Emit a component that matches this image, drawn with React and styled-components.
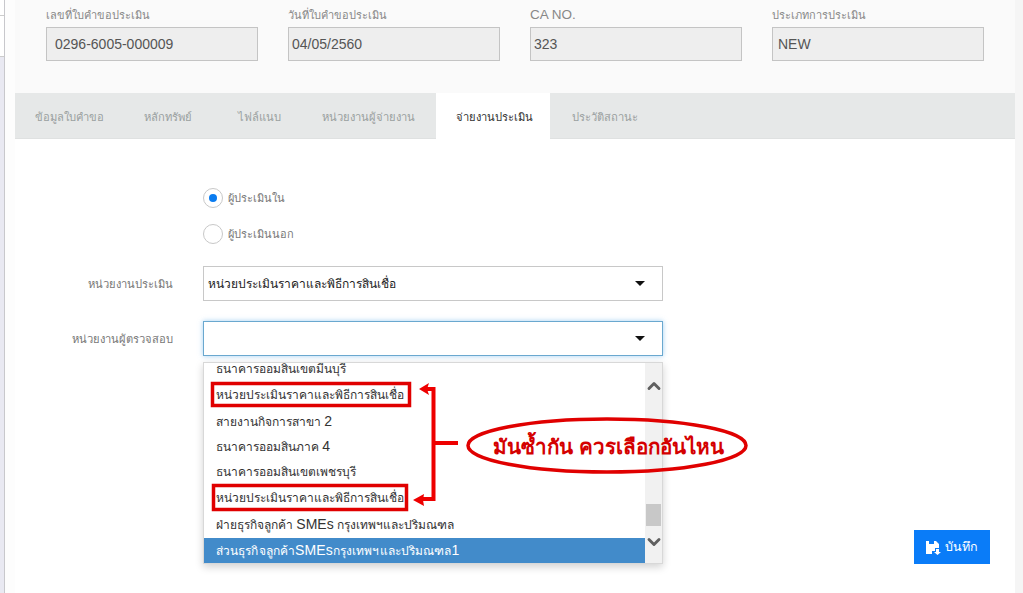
import styled, { createGlobalStyle } from "styled-components";
import { ChevronDown, ChevronUp } from "lucide-react";

const GlobalStyle = createGlobalStyle`
  html, body {
    margin: 0;
    padding: 0;
    height: 593px;
    overflow: hidden;
    background: #f5f5f5;
    font-family: "Liberation Sans", "Noto Sans", sans-serif;
  }
`;

const Page = styled.div`
  position: relative;
  width: 1023px;
  height: 593px;
  overflow: hidden;
  display: flex;
`;

const SideStrip = styled.div`
  width: 15px;
  flex: none;
  background: #fdfdfd;
`;

const Rail = styled.div`
  width: 5px;
  height: 100%;
  box-sizing: border-box;
  border-right: 1px solid #c8c8cc;
  display: flex;
  flex-direction: column;
`;

const RailCell = styled.div`
  height: ${(props) => props.$h}px;
  flex: ${(props) => (props.$h ? "none" : 1)};
  box-sizing: border-box;
  background: ${(props) => (props.$h ? "#fff" : "#e9e9f2")};
  border-bottom: ${(props) => (props.$h ? "1px solid #ccc" : "none")};
`;

const Main = styled.main`
  width: 1000px;
  flex: none;
  display: flex;
  flex-direction: column;
`;

const Header = styled.section`
  height: 93px;
  box-sizing: border-box;
  background: #fafafa;
  display: flex;
  padding: 7px 0 0 31px;
  gap: 30px;
`;

const HeadField = styled.div`
  width: 212px;
  flex: none;
`;

const HeadLabel = styled.div`
  height: 21px;
  font-size: ${(props) => (props.$latin ? 13.5 : 11)}px;
  line-height: 16px;
  color: #888;
`;

const ReadOnly = styled.div`
  box-sizing: border-box;
  height: 34px;
  margin-top: -1px;
  border: 1px solid #c4c4c4;
  background: #eee;
  color: #555;
  font-size: 14px;
  line-height: 32px;
  padding-left: ${(props) => props.$inset || 8}px;
`;

const TabBar = styled.nav`
  height: 46px;
  box-sizing: border-box;
  background: #e6e8e8;
  border-bottom: 1px solid #dfe1e1;
  display: flex;
`;

const Tab = styled.div`
  box-sizing: border-box;
  height: 46px;
  width: ${(props) => props.$w}px;
  padding-left: ${(props) => props.$pad}px;
  font-size: 11.2px;
  line-height: 49px;
  white-space: nowrap;
  color: ${(props) => (props.$active ? "#333" : "#9aa0a0")};
  background: ${(props) => (props.$active ? "#fff" : "transparent")};
`;

const Body = styled.section`
  flex: 1;
  background: #fff;
  display: flex;
  flex-direction: column;
  padding: 48px 0 0 0;
  position: relative;
`;

const RadioRow = styled.label`
  display: flex;
  align-items: center;
  gap: 5px;
  height: 22px;
  margin: 0 0 14px 188px;
  font-size: 11px;
  color: #777;
`;

const RadioCircle = styled.span`
  box-sizing: border-box;
  width: 20px;
  height: 20px;
  border-radius: 50%;
  border: 1px solid #c8c8c8;
  background: #fff;
  display: flex;
  align-items: center;
  justify-content: center;
  &::after {
    content: "";
    width: 8px;
    height: 8px;
    border-radius: 50%;
    background: ${(props) => (props.$checked ? "#0a7cf0" : "transparent")};
  }
`;

const FormRow = styled.div`
  display: flex;
  align-items: center;
  margin-top: ${(props) => props.$top}px;
`;

const RowLabel = styled.div`
  width: 158px;
  margin-right: 30px;
  text-align: right;
  font-size: 11.2px;
  color: #777;
`;

const SelectBox = styled.div`
  box-sizing: border-box;
  width: 460px;
  height: 35px;
  border: 1px solid ${(props) => (props.$focus ? "#6aa8cf" : "#c8c8c8")};
  box-shadow: ${(props) => (props.$focus ? "0 0 5px rgba(102,175,233,.6)" : "none")};
  background: #fff;
  display: flex;
  align-items: center;
  justify-content: space-between;
  padding: 0 17px 0 4px;
  font-size: 12px;
  color: #222;
`;

const Caret = styled.span`
  width: 0;
  height: 0;
  border-left: 5px solid transparent;
  border-right: 5px solid transparent;
  border-top: 5px solid #111;
`;

const Dropdown = styled.div`
  position: absolute;
  left: 188px;
  top: 223px;
  box-sizing: border-box;
  width: 460px;
  height: 202px;
  border: 1px solid #d8d8d8;
  background: #fff;
  box-shadow: 0 3px 8px rgba(0, 0, 0, 0.18);
  display: flex;
  overflow: hidden;
`;

const OptionList = styled.div`
  flex: 1;
  margin-top: -6px;
`;

const Option = styled.div`
  height: 25.8px;
  line-height: 25.8px;
  padding-left: 12px;
  font-size: 12px;
  letter-spacing: ${(props) => (props.$selected ? "0.1px" : "0")};
  color: ${(props) => (props.$selected ? "#fff" : "#333")};
  background: ${(props) => (props.$selected ? "#428bca" : "transparent")};
  white-space: nowrap;
`;

const Latin = styled.span`
  font-size: 14px;
`;

const ScrollTrack = styled.div`
  width: 17px;
  flex: none;
  background: #f1f1f1;
  position: relative;
  display: flex;
  flex-direction: column;
  justify-content: space-between;
  align-items: center;
  padding: 13px 0 11px;
  color: #606060;
`;

const ScrollThumb = styled.div`
  position: absolute;
  left: 1px;
  right: 1px;
  top: 141px;
  height: 22px;
  background: #c8c8c8;
`;

const SaveButton = styled.button`
  position: absolute;
  left: 899px;
  top: 391px;
  width: 76px;
  height: 34px;
  border: none;
  background: #0a7cf8;
  color: #fff;
  font-family: inherit;
  font-size: 12.5px;
  display: flex;
  align-items: center;
  justify-content: center;
  gap: 3px;
  padding: 0;
`;

const Overlay = styled.svg`
  position: absolute;
  left: 0;
  top: 0;
  pointer-events: none;
`;

const CalloutText = styled.div`
  position: absolute;
  left: 493px;
  top: 432px;
  font-size: 20.6px;
  line-height: 30px;
  font-weight: 700;
  color: #d40000;
  white-space: nowrap;
`;

const options = [
  "ธนาคารออมสินเขตมีนบุรี",
  "หน่วยประเมินราคาและพิธีการสินเชื่อ",
  <>สายงานกิจการสาขา <Latin>2</Latin></>,
  <>ธนาคารออมสินภาค <Latin>4</Latin></>,
  "ธนาคารออมสินเขตเพชรบุรี",
  "หน่วยประเมินราคาและพิธีการสินเชื่อ",
  <>ฝ่ายธุรกิจลูกค้า <Latin>SMEs</Latin> กรุงเทพฯและปริมณฑล</>,
];

const tabs = [
  { label: "ข้อมูลใบคำขอ", w: 109, pad: 20 },
  { label: "หลักทรัพย์", w: 94, pad: 20 },
  { label: "ไฟล์แนบ", w: 84, pad: 20 },
  { label: "หน่วยงานผู้จ่ายงาน", w: 134, pad: 20 },
  { label: "จ่ายงานประเมิน", w: 114, pad: 20, active: true },
  { label: "ประวัติสถานะ", w: 100, pad: 22 },
];

const heads = [
  ["เลขที่ใบคำขอประเมิน", "0296-6005-000009"],
  ["วันที่ใบคำขอประเมิน", "04/05/2560", 3],
  ["CA NO.", "323", 3],
  ["ประเภทการประเมิน", "NEW", 5],
];

const SaveIcon = () => (
  <svg width="16" height="15" viewBox="0 0 16 15" fill="#fff">
    <path d="M0 1h10l3 3v4H9v3H6v3H0z" />
    <path d="M3 1h5v3H3z" fill="#0a7cf8" />
    <path d="M10 9h3v3h2l-3.5 3L8 12h2z" />
  </svg>
);

export default function App() {
  return (
    <Page>
      <GlobalStyle />
      <SideStrip>
        <Rail>
          <RailCell $h={16} />
          <RailCell $h={41} />
          <RailCell />
        </Rail>
      </SideStrip>
      <Main>
        <Header>
          {heads.map(([label, value, inset]) => (
            <HeadField key={label}>
              <HeadLabel $latin={label === "CA NO."}>{label}</HeadLabel>
              <ReadOnly $inset={inset}>{value}</ReadOnly>
            </HeadField>
          ))}
        </Header>
        <TabBar>
          {tabs.map((t) => (
            <Tab key={t.label} $w={t.w} $pad={t.pad} $active={t.active}>
              {t.label}
            </Tab>
          ))}
        </TabBar>
        <Body>
          <RadioRow>
            <RadioCircle $checked />
            ผู้ประเมินใน
          </RadioRow>
          <RadioRow>
            <RadioCircle />
            ผู้ประเมินนอก
          </RadioRow>
          <FormRow $top={7}>
            <RowLabel>หน่วยงานประเมิน</RowLabel>
            <SelectBox>
              หน่วยประเมินราคาและพิธีการสินเชื่อ
              <Caret />
            </SelectBox>
          </FormRow>
          <FormRow $top={20}>
            <RowLabel>หน่วยงานผู้ตรวจสอบ</RowLabel>
            <SelectBox $focus>
              <span />
              <Caret />
            </SelectBox>
          </FormRow>
          <Dropdown>
            <OptionList>
              {options.map((o, i) => (
                <Option key={i}>{o}</Option>
              ))}
              <Option $selected>
                ส่วนธุรกิจลูกค้า<Latin>SMEs</Latin>กรุงเทพฯและปริมณฑล<Latin>1</Latin>
              </Option>
            </OptionList>
            <ScrollTrack>
              <ChevronUp size={20} strokeWidth={3.5} />
              <ChevronDown size={20} strokeWidth={3.5} />
              <ScrollThumb />
            </ScrollTrack>
          </Dropdown>
          <SaveButton>
            <SaveIcon />
            บันทึก
          </SaveButton>
        </Body>
      </Main>
      <Overlay width="1023" height="593" viewBox="0 0 1023 593">
        <g fill="none" stroke="#e00000" strokeWidth="3.5">
          <rect x="212.5" y="383.5" width="197" height="22" />
          <rect x="213.5" y="485.5" width="193" height="24" />
        </g>
        <g fill="none" stroke="#ee0000" strokeWidth="4">
          <path d="M426 389H433.5V499H422" />
          <path d="M433 443H458" />
        </g>
        <g fill="#ee0000">
          <path d="M419 389l10-6-2 6 2 6z" />
          <path d="M413 500l11-6-1 6 1 6z" />
        </g>
        <ellipse cx="607" cy="445.5" rx="139" ry="26.5" fill="none" stroke="#e00000" strokeWidth="3.5" />
      </Overlay>
      <CalloutText>มันซ้ำกัน ควรเลือกอันไหน</CalloutText>
    </Page>
  );
}
